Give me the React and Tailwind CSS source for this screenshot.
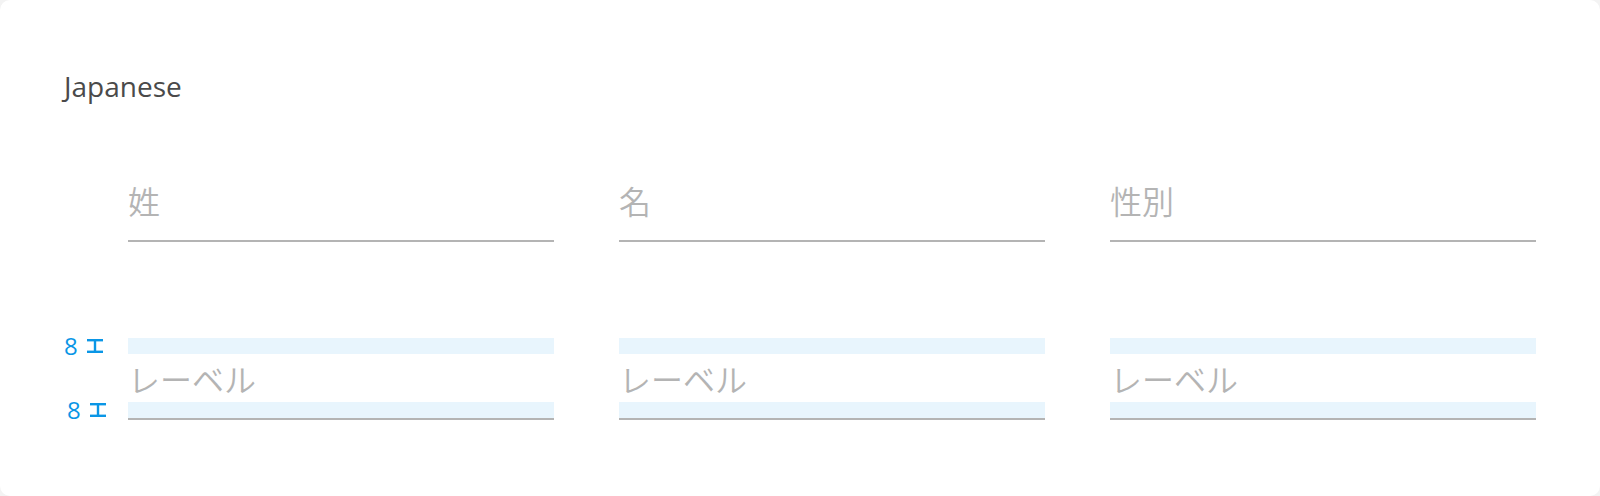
import React from "react";

const jp = { fontFamily: '"Noto Sans CJK JP", "Noto Sans", sans-serif' };
const os = { fontFamily: '"Open Sans", "Noto Sans", sans-serif' };

function IBeam() {
  return (
    <svg width="16" height="14" viewBox="0 0 16 14" className="block">
      <rect x="0" y="0" width="16" height="2.4" fill="#0a96e6" />
      <rect x="6.8" y="0" width="2.4" height="14" fill="#0a96e6" />
      <rect x="0" y="11.6" width="16" height="2.4" fill="#0a96e6" />
    </svg>
  );
}

function Marker({ shift }) {
  return (
    <div className={`flex items-center h-4 ${shift}`}>
      <span className="text-[24px] leading-none text-[#0a96e6]" style={os}>8</span>
      <span className="ml-[9px]"><IBeam /></span>
    </div>
  );
}

function PlainField({ label }) {
  return (
    <div className="flex flex-col">
      <div className="h-[80px] flex items-center">
        <span className="text-[32px] leading-[48px] font-[350] text-[#b4b4b4]" style={jp}>{label}</span>
      </div>
      <div className="h-[2px] bg-[#b4b4b4]" />
    </div>
  );
}

function SpecField() {
  return (
    <div className="flex flex-col">
      <div className="h-4 bg-[#e8f5fd]" />
      <div className="h-[48px] flex items-center">
        <span className="text-[32px] leading-[48px] font-[350] text-[#b4b4b4]" style={jp}>レーベル</span>
      </div>
      <div className="h-4 bg-[#e8f5fd]" />
      <div className="h-[2px] bg-[#b4b4b4]" />
    </div>
  );
}

export default function App() {
  return (
    <div className="w-[1600px] h-[496px] bg-[#f3f3f3]">
      <div className="w-full h-full bg-white rounded-[10px] px-16 pt-[67px] flex flex-col">
        <div className="text-[28px] leading-[38px] text-[#4a4a4a]" style={os}>Japanese</div>
        <div className="mt-[55px] pl-16 grid grid-cols-3 gap-x-[65px]">
          <PlainField label="姓" />
          <PlainField label="名" />
          <PlainField label="性別" />
        </div>
        <div className="mt-[96px] flex">
          <div className="w-16 flex flex-col justify-between pb-[2px]">
            <Marker shift="ml-0" />
            <Marker shift="ml-[3px]" />
          </div>
          <div className="flex-1 grid grid-cols-3 gap-x-[65px]">
            <SpecField />
            <SpecField />
            <SpecField />
          </div>
        </div>
      </div>
    </div>
  );
}
